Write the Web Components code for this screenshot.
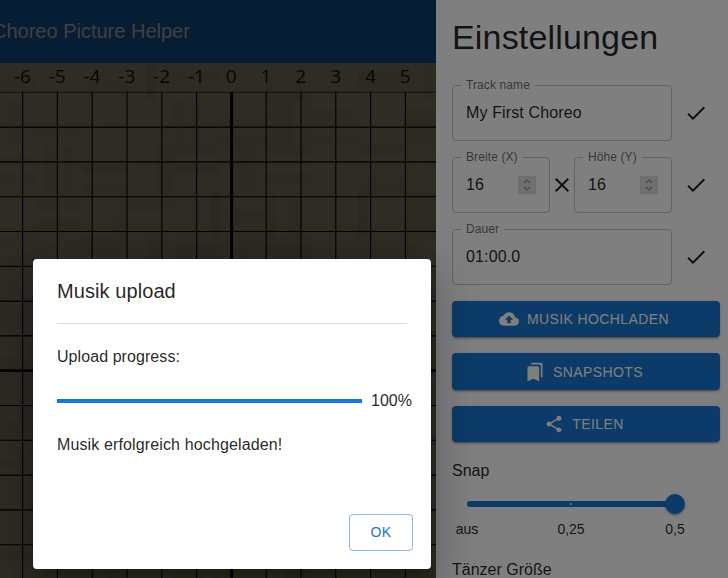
<!DOCTYPE html>
<html lang="de">
<head>
<meta charset="utf-8">
<title>Choreo Picture Helper</title>
<style>
  html, body { margin: 0; height: 100%; overflow: hidden; font-family: "Liberation Sans", Arial, sans-serif; }
</style>
</head>
<body>
<x-app>
  <x-stage slot="main"></x-stage>
  <x-settings slot="side"></x-settings>
  <x-upload-dialog slot="dialog"></x-upload-dialog>
</x-app>
<script>
const ICONS = {
  check: 'M9 16.17 4.83 12l-1.42 1.41L9 19 21 7l-1.41-1.41z',
  close: 'M19 6.41 17.59 5 12 10.59 6.41 5 5 6.41 10.59 12 5 17.59 6.41 19 12 13.41 17.59 19 19 17.59 13.41 12z',
  cloud: 'M19.35 10.04C18.67 6.59 15.64 4 12 4 9.11 4 6.6 5.64 5.35 8.04 2.34 8.36 0 10.91 0 14c0 3.31 2.69 6 6 6h13c2.76 0 5-2.24 5-5 0-2.64-2.05-4.78-4.65-4.96zM14 13v4h-4v-4H7l5-5 5 5h-3z',
  bookmarks: 'M19 18l2 1V3c0-1.1-.9-2-2-2H8.99C7.89 1 7 1.9 7 3h10c1.1 0 2 .9 2 2v13zM15 5H5c-1.1 0-2 .9-2 2v16l7-3 7 3V7c0-1.1-.9-2-2-2z',
  share: 'M18 16.08c-.76 0-1.44.3-1.96.77L8.91 12.7c.05-.23.09-.46.09-.7s-.04-.47-.09-.7l7.05-4.11c.54.5 1.25.81 2.04.81 1.66 0 3-1.34 3-3s-1.34-3-3-3-3 1.34-3 3c0 .24.04.47.09.7L8.04 9.81C7.5 9.31 6.79 9 6 9c-1.66 0-3 1.34-3 3s1.34 3 3 3c.79 0 1.5-.31 2.04-.81l7.12 4.16c-.05.21-.08.43-.08.65 0 1.61 1.31 2.92 2.92 2.92 1.61 0 2.92-1.31 2.92-2.92s-1.31-2.92-2.92-2.92z'
};
const svgIcon = (n, s, c, st = '') => `<svg width="${s}" height="${s}" viewBox="0 0 24 24" fill="${c}" aria-hidden="true" style="display:block;flex:none;${st}"><path d="${ICONS[n]}"/></svg>`;

class Base extends HTMLElement {
  render(html) { this.attachShadow({ mode: 'open' }).innerHTML = html; }
}

customElements.define('x-app', class extends Base {
  constructor() { super(); this.render(`<style>
    :host { display: block; position: relative; width: 728px; height: 578px; overflow: hidden; background: #fff; }
    .layout { display: flex; height: 100%; }
    .main { position: relative; width: 436px; flex: none; overflow: hidden; }
    .side { width: 292px; flex: none; background: #fff; position: relative; }
    .scrim { position: absolute; inset: 0; background: rgba(0,0,0,.5); }
    .dlg { position: absolute; left: 33px; top: 259px; }
  </style>
  <div class="layout">
    <div class="main"><slot name="main"></slot><div class="scrim"></div></div>
    <div class="side"><slot name="side"></slot></div>
  </div>
  <div class="scrim"></div>
  <div class="dlg"><slot name="dialog"></slot></div>`); }
});

customElements.define('x-stage', class extends Base {
  constructor() {
    super();
    const P = 34.8, C = 231.4, T = 92;
    let seed = 7; const rnd = () => (seed = (seed * 16807) % 2147483647) / 2147483647;
    let wood = '';
    const B = 46;
    for (let r = 0; r < 12; r++) for (let q = 0; q < 11; q++) {
      const x = q * B - 10, y = r * B + 54, horiz = (q + r) % 2 === 0;
      const n = 5, w = B / n;
      for (let i = 0; i < n; i++) {
        const t = rnd();
        const col = t > .5 ? `rgba(255,245,225,${((t - .5) * .1).toFixed(3)})` : `rgba(40,30,15,${((.5 - t) * .12).toFixed(3)})`;
        wood += horiz
          ? `<rect x="${x}" y="${(y + i * w).toFixed(1)}" width="${B}" height="${w.toFixed(1)}" fill="${col}"/>`
          : `<rect x="${(x + i * w).toFixed(1)}" y="${y}" width="${w.toFixed(1)}" height="${B}" fill="${col}"/>`;
      }
    }
    let grid = '';
    for (let k = -7; k <= 6; k++) {
      const x = (k === 0 ? 231.6 : C + k * P);
      grid += `<line x1="${x.toFixed(1)}" y1="${T}" x2="${x.toFixed(1)}" y2="578" stroke="#000" stroke-width="${k === 0 ? 3 : 1.1}"/>`;
    }
    for (let k = 0; k <= 14; k++) {
      const y = T + .3 + k * P;
      grid += `<line x1="0" y1="${y.toFixed(1)}" x2="436" y2="${y.toFixed(1)}" stroke="#000" stroke-opacity="${k === 0 ? .6 : 1}" stroke-width="${k === 8 ? 2.8 : 1.1}"/>`;
    }
    let nums = '';
    for (let k = -8; k <= 8; k++) nums += `<span>${k}</span>`;
    this.render(`<style>
      :host { display: block; height: 578px; }
      .bar { height: 63px; background: #1976d2; color: #fff; font: 20px/63px "Liberation Sans", Arial, sans-serif; padding-left: 12px; margin-left: -20px; white-space: nowrap; overflow: hidden; }
      .floor { position: relative; height: 515px; background: #bcae94; overflow: hidden; }
      svg { position: absolute; left: 0; top: -63px; }
      .ruler { position: relative; display: flex; margin-left: -64.6px; height: 27px; }
      .ruler span { width: 34.8px; flex: none; text-align: center; font: 19px/27px "Open Sans", sans-serif; color: rgba(0,0,0,.87); }
    </style>
    <div class="bar">Choreo Picture Helper</div>
    <div class="floor">
      <svg width="436" height="578" viewBox="0 0 436 578" aria-hidden="true">${wood}${grid}</svg>
      <div class="ruler">${nums}</div>
    </div>`);
  }
});

customElements.define('x-field', class extends Base {
  constructor() {
    super();
    this.render(`<style>
      :host { display: block; flex: 1 1 0; min-width: 0; font-family: "Liberation Sans", Arial, sans-serif; }
      fieldset { box-sizing: border-box; height: 63px; margin: 0; padding: 0 8px; border: 1px solid rgba(0,0,0,.23); border-radius: 4px; display: flex; min-width: 0; }
      legend { padding: 0 5px; font-size: 12px; line-height: 14px; letter-spacing: .1px; color: rgba(0,0,0,.6); white-space: nowrap; }
      .row { display: flex; align-items: center; justify-content: space-between; width: 100%; padding: 9px 5px 0; height: 24px; color: rgba(0,0,0,.87); font-size: 16px; line-height: 24px; letter-spacing: .13px; box-sizing: content-box; }
      .spin { width: 18px; height: 18px; background: #dedede; flex: none; }
      .spin svg { display: block; }
    </style>
    <fieldset><legend><slot name="label"></slot></legend>
      <div class="row"><span><slot></slot></span>${this.hasAttribute('number') ? `<span class="spin"><svg width="18" height="18" viewBox="0 0 18 18" fill="none" stroke="#9a9a9a" stroke-width="1.4"><path d="M6 7 9 4 12 7M6 11 9 14 12 11"/></svg></span>` : ''}</div>
    </fieldset>`);
  }
});

customElements.define('x-btn', class extends Base {
  constructor() {
    super();
    this.render(`<style>
      :host { display: flex; align-items: center; justify-content: center; gap: 8px; height: 36px; border-radius: 4px; background: #1976d2; color: #fff; font: 14px/36px "Liberation Sans", Arial, sans-serif; letter-spacing: .4px; text-transform: uppercase;
        box-shadow: 0 3px 1px -2px rgba(0,0,0,.2), 0 2px 2px 0 rgba(0,0,0,.14), 0 1px 5px 0 rgba(0,0,0,.12); }
    </style>${svgIcon(this.getAttribute('icon'), 20, '#fff', 'margin-left:-4px')}<span><slot></slot></span>`);
  }
});

customElements.define('x-slider', class extends Base {
  constructor() {
    super();
    this.render(`<style>
      :host { display: block; font: 14px/20px "Liberation Sans", Arial, sans-serif; color: rgba(0,0,0,.87); }
      .track { position: relative; height: 6px; width: 208px; margin-left: 15px; border-radius: 3px; background: #1976d2; }
      .dot { position: absolute; top: 2px; width: 2px; height: 2px; background: #b9d3ec; }
      .thumb { position: absolute; right: -10px; top: -7px; width: 20px; height: 20px; border-radius: 50%; background: #1976d2; box-shadow: 0 3px 1px -2px rgba(0,0,0,.2), 0 2px 2px 0 rgba(0,0,0,.14), 0 1px 5px 0 rgba(0,0,0,.12); }
      .marks { display: flex; justify-content: space-between; width: 248px; margin: 12px 0 0 -5px; }
      .marks span { width: 40px; text-align: center; }
    </style>
    <div class="track"><i class="dot" style="left:103px"></i><i class="thumb"></i></div>
    <div class="marks"><span>aus</span><span>0,25</span><span>0,5</span></div>`);
  }
});

customElements.define('x-settings', class extends Base {
  constructor() {
    super();
    const chk = `<span class="chk">${svgIcon('check', 24, 'rgba(0,0,0,.87)')}</span>`;
    this.render(`<style>
      :host { display: block; height: 578px; overflow: hidden; box-sizing: border-box; padding: 17px 8px 0 16px; font-family: "Liberation Sans", Arial, sans-serif; color: rgba(0,0,0,.87); }
      h1 { margin: 0 0 21px; font-size: 34px; line-height: 40px; font-weight: 400; letter-spacing: .17px; white-space: nowrap; }
      .row { display: flex; align-items: flex-start; width: 268px; margin-bottom: 9px; }
      .fields { display: flex; width: 220px; flex: none; align-items: flex-start; }
      .fields x-field { flex: 1 1 0; }
      .times { width: 24px; flex: none; margin-top: 23px; }
      .chk { margin: 23px 0 0 12px; flex: none; }
      .btns { display: flex; flex-direction: column; gap: 16px; margin-top: 16px; width: 268px; }
      .tall { height: 37px; }
      h2 { font-size: 16px; line-height: 24px; font-weight: 400; margin: 0; }
      .snap { margin-top: 17px; }
      x-slider { margin-top: 18px; }
      .size { margin-top: 19px; }
    </style>
    <h1>Einstellungen</h1>
    <div class="row"><div class="fields"><x-field><span slot="label">Track name</span>My First Choreo</x-field></div>${chk}</div>
    <div class="row"><div class="fields">
      <x-field number><span slot="label">Breite (X)</span>16</x-field>
      <span class="times">${svgIcon('close', 24, 'rgba(0,0,0,.87)')}</span>
      <x-field number><span slot="label">Höhe (Y)</span>16</x-field>
    </div>${chk}</div>
    <div class="row" style="margin-bottom:0"><div class="fields"><x-field><span slot="label">Dauer</span>01:00.0</x-field></div>${chk}</div>
    <div class="btns">
      <x-btn icon="cloud">Musik hochladen</x-btn>
      <x-btn icon="bookmarks" class="tall">Snapshots</x-btn>
      <x-btn icon="share">Teilen</x-btn>
    </div>
    <h2 class="snap">Snap</h2>
    <x-slider></x-slider>
    <h2 class="size">Tänzer Größe</h2>`);
  }
});

customElements.define('x-upload-dialog', class extends Base {
  constructor() {
    super();
    this.render(`<style>
      :host { display: flex; flex-direction: column; box-sizing: border-box; width: 398px; height: 310px; padding: 0 18px 18px 24px; background: #fff; border-radius: 4px; color: rgba(0,0,0,.87); font: 16px/24px "Liberation Sans", Arial, sans-serif;
        box-shadow: 0 11px 15px -7px rgba(0,0,0,.2), 0 24px 38px 3px rgba(0,0,0,.14), 0 9px 46px 8px rgba(0,0,0,.12); }
      h2 { margin: 18px 0 0; font-size: 20px; line-height: 28px; font-weight: 400; letter-spacing: .08px; }
      hr { margin: 18px 6px 0 0; border: 0; height: 1px; background: #e0e0e0; }
      p { margin: 0; letter-spacing: .13px; }
      .lead { margin-top: 21px; letter-spacing: .07px; }
      .progress { display: flex; align-items: center; margin-top: 20px; white-space: nowrap; }
      .bar { width: 305px; height: 4px; background: #1976d2; margin-right: 9px; flex: none; }
      .msg { margin-top: 20px; }
      .foot { margin-top: auto; display: flex; justify-content: flex-end; }
      .ok { box-sizing: border-box; width: 64px; height: 37px; border: 1px solid rgba(25,118,210,.5); border-radius: 4px; color: #1976d2; font-size: 14px; line-height: 35px; text-align: center; letter-spacing: .4px; }
    </style>
    <h2>Musik upload</h2>
    <hr>
    <p class="lead">Upload progress:</p>
    <div class="progress"><div class="bar"></div><span>100%</span></div>
    <p class="msg">Musik erfolgreich hochgeladen!</p>
    <div class="foot"><div class="ok">OK</div></div>`);
  }
});
</script>
</body>
</html>
